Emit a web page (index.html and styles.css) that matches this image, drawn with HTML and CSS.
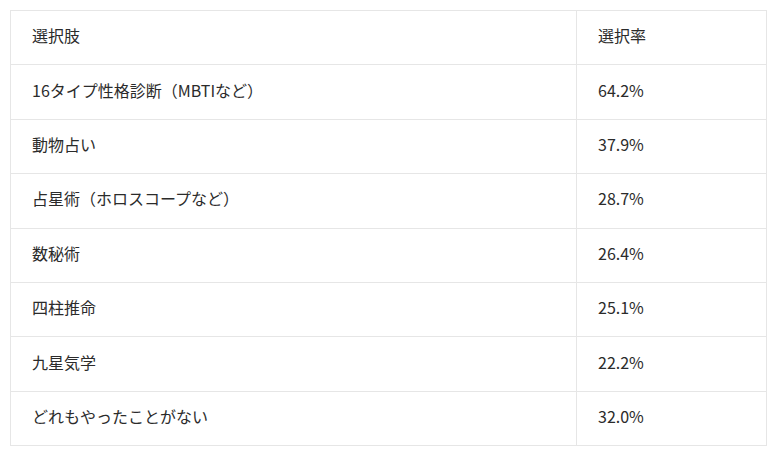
FILE: index.html
```html
<!DOCTYPE html>
<html lang="ja">
<head>
<meta charset="utf-8">
<link rel="stylesheet" href="styles.css">
</head>
<body>
<table class="results">
  <thead>
    <tr><th class="col-choice">選択肢</th><th class="col-rate">選択率</th></tr>
  </thead>
  <tbody>
    <tr><td>16タイプ性格診断（MBTIなど）</td><td>64.2%</td></tr>
    <tr><td>動物占い</td><td>37.9%</td></tr>
    <tr><td>占星術（ホロスコープなど）</td><td>28.7%</td></tr>
    <tr><td>数秘術</td><td>26.4%</td></tr>
    <tr><td>四柱推命</td><td>25.1%</td></tr>
    <tr><td>九星気学</td><td>22.2%</td></tr>
    <tr><td>どれもやったことがない</td><td>32.0%</td></tr>
  </tbody>
</table>
</body>
</html>
```
FILE: styles.css
```css
html, body {
  margin: 0;
  background: #ffffff;
}
body {
  padding: 10px;
  font-family: "Noto Sans CJK JP", "Noto Sans", sans-serif;
  color: #2b2b2b;
}
.results {
  width: 756px;
  border-collapse: collapse;
  table-layout: fixed;
  font-size: 16px;
}
.results th,
.results td {
  border: 1px solid #e6e6e6;
  height: 54.4px;
  padding: 0 21px 5px;
  text-align: left;
  font-weight: normal;
  vertical-align: middle;
  box-sizing: border-box;
}
.col-choice {
  width: 566px;
}
.col-rate {
  width: 190px;
}
```
